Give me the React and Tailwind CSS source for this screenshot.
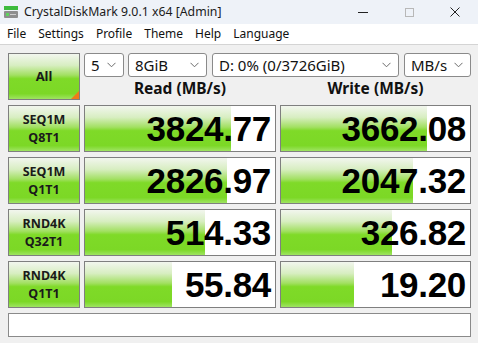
import React from "react";

const UI = { fontFamily: '"Segoe UI", "Noto Sans", "Open Sans", sans-serif' };
const NUM = { fontFamily: '"Liberation Sans", Arial, sans-serif' };

const rows = [
    { a: "SEQ1M", b: "Q8T1", read: "3824.77", write: "3662.08", rw: 146, ww: 146 },
    { a: "SEQ1M", b: "Q1T1", read: "2826.97", write: "2047.32", rw: 142, ww: 132 },
    { a: "RND4K", b: "Q32T1", read: "514.33", write: "326.82", rw: 120, ww: 111 },
    { a: "RND4K", b: "Q1T1", read: "55.84", write: "19.20", rw: 87, ww: 73 },
];

const green =
    "bg-[linear-gradient(to_bottom,#f2f6ee_0%,#d8eec2_25%,#a2e062_47%,#7fda28_55%,#7cd826_88%,#9fe462_100%)]";

function Chevron() {
    return (
        <svg width="9" height="6" viewBox="0 0 9 6" className="shrink-0">
            <path d="M0.5 0.8 L4.5 4.8 L8.5 0.8" fill="none" stroke="#6b6b6b" strokeWidth="1" />
        </svg>
    );
}

function Combo({ label, className }) {
    return (
        <div
            className={`h-[24px] bg-white border border-[#8a8a8a] rounded-[3px] flex items-center justify-between pl-[6px] pr-[7px] text-[15px] text-[#111] ${className}`}
        >
            <span className="leading-none">{label}</span>
            <Chevron />
        </div>
    );
}

function Label({ a, b }) {
    return (
        <div
            className={`w-[72px] h-[47px] border border-[#7f7f7f] ${green} flex flex-col items-center justify-center text-[12.5px] font-bold text-[#1a1a1a] leading-[18px]`}
        >
            <span>{a}</span>
            <span>{b}</span>
        </div>
    );
}

function Meter({ value, fill, w }) {
    return (
        <div className="relative h-[47px] border border-[#7f7f7f] bg-white overflow-hidden" style={{ width: w }}>
            <div className={`absolute left-0 top-0 bottom-0 ${green}`} style={{ width: fill }} />
            <div
                className="relative h-full flex items-center justify-end pr-[4px] text-[35px] font-bold text-black leading-none tracking-[-0.3px]"
                style={NUM}
            >
                {value}
            </div>
        </div>
    );
}

export default function App() {
    return (
        <div className="w-[478px] h-[343px] bg-[#f0f0f0] flex flex-col overflow-hidden" style={UI}>
            {/* Title bar */}
            <div className="h-[24px] bg-[#eef2f8] flex items-center">
                <svg width="16" height="16" viewBox="0 0 16 16" className="ml-[3px] mr-[5px]">
                    <rect x="1" y="2" width="14" height="4" fill="#3dbb3d" />
                    <rect x="1" y="7" width="14" height="7" rx="1" fill="#8e8e8e" />
                    <rect x="3" y="9" width="3" height="3" fill="#5fd35f" />
                    <rect x="7" y="10" width="6" height="1" fill="#cfcfcf" />
                </svg>
                <span className="text-[12.3px] text-[#1b1b1b]">CrystalDiskMark 9.0.1 x64 [Admin]</span>
                <div className="ml-auto flex items-center h-full">
                    <div className="w-[46px] h-full flex items-center justify-center">
                        <div className="w-[10px] h-[1px] bg-[#222]" />
                    </div>
                    <div className="w-[46px] h-full flex items-center justify-center">
                        <div className="w-[9px] h-[9px] border border-[#b8b8b8]" />
                    </div>
                    <div className="w-[46px] h-full flex items-center justify-center">
                        <svg width="10" height="10" viewBox="0 0 10 10">
                            <path d="M0.5 0.5 L9.5 9.5 M9.5 0.5 L0.5 9.5" stroke="#222" strokeWidth="1" />
                        </svg>
                    </div>
                </div>
            </div>

            {/* Menu bar */}
            <div className="h-[20px] bg-white border-b border-[#d4d4d4] flex items-center text-[12px] text-[#111] pl-[7px] gap-[12px] box-content">
                <span>File</span>
                <span>Settings</span>
                <span>Profile</span>
                <span>Theme</span>
                <span>Help</span>
                <span>Language</span>
            </div>

            {/* Main */}
            <div className="flex flex-col gap-[5px] pl-[8px] pt-[8px]">
                <div className="flex gap-[4px]">
                    <div
                        className={`relative w-[72px] h-[47px] border border-[#7f7f7f] ${green} flex items-center justify-center text-[13px] font-bold text-[#1a1a1a]`}
                    >
                        All
                        <div className="absolute right-0 bottom-0 w-0 h-0 border-l-[8px] border-l-transparent border-b-[8px] border-b-[#f07a1a]" />
                    </div>
                    <div className="flex flex-col">
                        <div className="flex h-[24px]">
                            <Combo label="5" className="w-[40px]" />
                            <Combo label="8GiB" className="w-[79px] ml-[4px]" />
                            <Combo label="D: 0% (0/3726GiB)" className="w-[187px] ml-[5px]" />
                            <Combo label="MB/s" className="w-[67px] ml-[5px]" />
                        </div>
                        <div className="flex h-[23px] items-center text-[15.5px] font-bold text-[#111]">
                            <div className="w-[192px] text-center">Read (MB/s)</div>
                            <div className="w-[191px] ml-[4px] text-center">Write (MB/s)</div>
                        </div>
                    </div>
                </div>

                {rows.map((r, i) => (
                    <div key={i} className="flex gap-[4px]">
                        <Label a={r.a} b={r.b} />
                        <Meter value={r.read} fill={r.rw} w={192} />
                        <Meter value={r.write} fill={r.ww} w={191} />
                    </div>
                ))}

                <div className="w-[463px] h-[24px] bg-white border border-[#8a8a8a]" />
            </div>
        </div>
    );
}
